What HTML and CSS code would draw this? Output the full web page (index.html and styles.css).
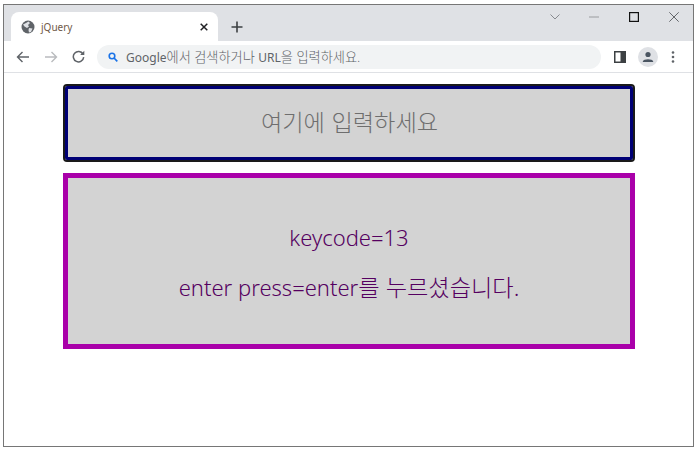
FILE: index.html
```html
<!DOCTYPE html>
<html lang="ko">
<head>
<meta charset="utf-8">
<title>jQuery</title>
<link rel="stylesheet" href="styles.css">
</head>
<body>
<div class="window">
  <div class="tabstrip">
    <div class="tab">
      <svg class="favicon" width="14" height="14" viewBox="0 0 14 14"><circle cx="7" cy="7" r="6.5" fill="#5f6368"/><path d="M2 4.5 L5 3 L7.5 1.5 L9 3 L7 5 L8 6.5 L6 8 L3.5 6.5Z M8 8 L11.5 8.5 L10 12 L8 12.5 L7.5 10Z" fill="#dfe1e5"/></svg>
      <span class="tab-title">jQuery</span>
      <svg class="tab-close" width="8" height="8" viewBox="0 0 8 8"><path d="M0.7 0.7 L7.3 7.3 M7.3 0.7 L0.7 7.3" stroke="#202124" stroke-width="1.5"/></svg>
    </div>
    <svg class="newtab" width="12" height="12" viewBox="0 0 12 12"><path d="M6 0.5 V11.5 M0.5 6 H11.5" stroke="#3c4043" stroke-width="1.6"/></svg>
    <div class="wincontrols">
      <svg class="ctl-chevron" width="10" height="6" viewBox="0 0 10 6"><path d="M0.5 0.5 L5 5 L9.5 0.5" fill="none" stroke="#7d8084" stroke-width="0.9"/></svg>
      <svg class="ctl-min" width="10" height="2" viewBox="0 0 10 2"><path d="M0 1 H10" stroke="#9a9c9f" stroke-width="1"/></svg>
      <svg class="ctl-max" width="10" height="10" viewBox="0 0 10 10"><rect x="0.6" y="0.6" width="8.8" height="8.8" fill="none" stroke="#111" stroke-width="1.2"/></svg>
      <svg class="ctl-close" width="10" height="10" viewBox="0 0 10 10"><path d="M0.3 0.3 L9.7 9.7 M9.7 0.3 L0.3 9.7" stroke="#55585c" stroke-width="0.9"/></svg>
    </div>
  </div>
  <div class="toolbar">
    <svg class="nav nav-back" width="14" height="12" viewBox="0 0 14 12"><path d="M13 6 H1.5 M6.5 1 L1.5 6 L6.5 11" fill="none" stroke="#5f6368" stroke-width="1.4"/></svg>
    <svg class="nav nav-fwd" width="14" height="12" viewBox="0 0 14 12"><path d="M1 6 H12.5 M7.5 1 L12.5 6 L7.5 11" fill="none" stroke="#b9bbbe" stroke-width="1.4"/></svg>
    <svg class="nav nav-reload" width="13" height="13" viewBox="0 0 13 13"><path d="M11 4 A5.2 5.2 0 1 0 11.7 7.2" fill="none" stroke="#5f6368" stroke-width="1.5"/><path d="M12.3 0.8 V5 H8.1Z" fill="#5f6368"/></svg>
    <div class="omnibox">
      <svg class="search" width="10" height="10" viewBox="0 0 10 10"><circle cx="4" cy="4" r="2.8" fill="none" stroke="#1a73e8" stroke-width="1.6"/><path d="M6 6 L9.3 9.3" stroke="#1a73e8" stroke-width="1.7"/></svg>
      <span class="omni-text">Google<span class="omni-ko">에서 검색하거나 </span>URL<span class="omni-ko">을 입력하세요.</span></span>
    </div>
    <svg class="sidepanel" width="12" height="12" viewBox="0 0 12 12"><rect x="0.75" y="0.75" width="10.5" height="10.5" fill="#fff" stroke="#3c4043" stroke-width="1.5"/><rect x="6.5" y="1" width="5" height="10" fill="#3c4043"/></svg>
    <svg class="avatar" width="20" height="20" viewBox="0 0 20 20"><circle cx="10" cy="10" r="10" fill="#dfe1e5"/><circle cx="10" cy="7.5" r="2.6" fill="#4a5561"/><path d="M4.8 14.6 C5.2 11.6 14.8 11.6 15.2 14.6 V15 H4.8Z" fill="#4a5561"/></svg>
    <svg class="menu" width="4" height="12" viewBox="0 0 4 12"><circle cx="2" cy="1.5" r="1.3" fill="#5f6368"/><circle cx="2" cy="6" r="1.3" fill="#5f6368"/><circle cx="2" cy="10.5" r="1.3" fill="#5f6368"/></svg>
  </div>
  <main class="content">
    <input class="entry" type="text" placeholder="여기에 입력하세요">
    <div class="result">
      <p class="line">keycode=13</p>
      <p class="line">enter press=enter<span class="ko">를 누르셨습니다.</span></p>
    </div>
  </main>
</div>
</body>
</html>
```
FILE: styles.css
```css
* { box-sizing: border-box; }
html, body { margin: 0; height: 100%; background: #fff; }
body { padding: 4px 5px 6px 3px; font-family: "Noto Sans", "Noto Sans CJK KR", sans-serif; }
.window {
  height: 443px;
  border: 1px solid #767676;
  display: flex;
  flex-direction: column;
  background: #fff;
  overflow: hidden;
}
.tabstrip {
  height: 36px;
  flex: none;
  background: #dfe1e5;
  display: flex;
  align-items: flex-end;
  padding-left: 7px;
}
.tab {
  width: 207px;
  height: 29px;
  background: #fff;
  border-radius: 8px 8px 0 0;
  display: flex;
  align-items: center;
  padding: 0 10px;
}
.favicon { flex: none; }
.tab-title {
  flex: 1;
  margin-left: 6px;
  font-size: 10px;
  color: #6f5a48;
}
.tab-close { flex: none; }
.newtab { flex: none; margin: 0 0 8px 13px; }
.wincontrols {
  margin-left: auto;
  align-self: flex-start;
  display: flex;
  align-items: center;
  height: 24px;
  padding-right: 14px;
}
.ctl-chevron { margin-right: 29px; }
.ctl-min { margin-right: 30px; }
.ctl-max { margin-right: 30px; }
.toolbar {
  height: 32px;
  flex: none;
  background: #fff;
  border-bottom: 1px solid #dfe1e5;
  display: flex;
  align-items: center;
  padding-left: 12px;
}
.nav { flex: none; }
.nav-fwd { margin-left: 14px; }
.nav-reload { margin-left: 14px; }
.omnibox {
  flex: none;
  width: 504px;
  height: 24px;
  margin-left: 12px;
  background: #f1f3f4;
  border-radius: 12px;
  display: flex;
  align-items: center;
  padding-left: 11px;
}
.search { flex: none; }
.omni-text {
  margin-left: 8px;
  font-size: 12px;
  color: #5f6368;
  white-space: nowrap;
}
.omni-ko { font-size: 13.2px; font-weight: 300; }
.sidepanel { flex: none; margin-left: 13px; }
.avatar { flex: none; margin-left: 12px; }
.menu { flex: none; margin-left: 13px; }
.content {
  flex: 1;
  padding: 11px 0 0 59px;
  display: flex;
  flex-direction: column;
  gap: 11px;
}
.entry {
  width: 572px;
  height: 78px;
  border: 2px solid #1a1a1a;
  box-shadow: inset 0 0 0 3px #000075;
  outline: none;
  border-radius: 4px;
  background: #d3d3d3;
  text-align: center;
  font-family: "Noto Sans CJK KR", sans-serif;
  font-size: 23.2px;
  font-weight: 300;
  padding: 0 0 5px 1px;
  margin: 0;
}
.entry::placeholder { color: #6e6e6e; opacity: 1; }
.result {
  width: 572px;
  height: 176px;
  border: 5px solid #a900a9;
  background: #d3d3d3;
  color: #550060;
  font-size: 22px;
  font-weight: 300;
  text-align: center;
  padding-top: 43px;
  display: flex;
  flex-direction: column;
  gap: 18px;
}
.line { margin: 0; line-height: 32px; }
.ko { font-size: 23.2px; }
```
